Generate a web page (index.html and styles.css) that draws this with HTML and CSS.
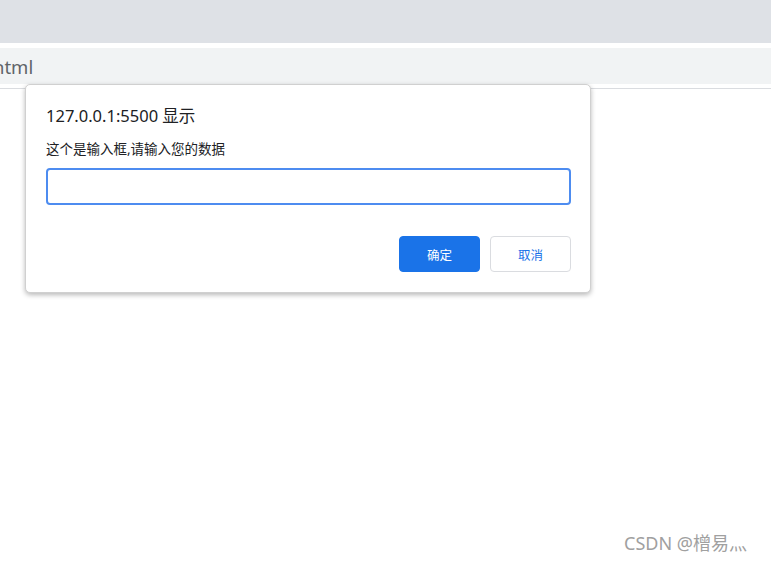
FILE: index.html
```html
<!DOCTYPE html>
<html lang="zh">
<head>
<meta charset="utf-8">
<title>prompt</title>
<link rel="stylesheet" href="styles.css">
</head>
<body>
<div class="tabstrip"></div>
<div class="gap"></div>
<div class="toolbar"><span class="url">html</span></div>
<div class="spacer"></div>
<div class="page">
  <div class="watermark">CSDN @橧易灬</div>
</div>
<div class="dialog">
  <div class="title">127.0.0.1:5500 显示</div>
  <div class="message">这个是输入框,请输入您的数据</div>
  <div class="field"></div>
  <div class="actions">
    <button class="btn primary">确定</button>
    <button class="btn secondary">取消</button>
  </div>
</div>
</body>
</html>
```

FILE: styles.css
```css
html, body {
  margin: 0;
  padding: 0;
}
body {
  width: 771px;
  height: 562px;
  overflow: hidden;
  position: relative;
  background: #ffffff;
  font-family: "Noto Sans", "Noto Sans CJK SC", sans-serif;
}
.tabstrip {
  height: 43px;
  background: #dee1e6;
}
.gap {
  height: 5px;
  background: #ffffff;
}
.toolbar {
  height: 36px;
  background: #f1f3f4;
  overflow: hidden;
  display: flex;
  align-items: center;
}
.url {
  font-size: 18.5px;
  color: #5f6368;
  margin-left: -7px;
  line-height: 22px;
  padding-top: 1px;
}
.spacer {
  height: 4px;
  border-bottom: 1px solid #dadce0;
}
.page {
  height: 473px;
  display: flex;
  justify-content: flex-end;
  align-items: flex-end;
}
.watermark {
  font-size: 18px;
  color: #a0a0a0;
  margin: 0 16px 7px 0;
  white-space: nowrap;
  width: 131px;
  overflow: hidden;
}
.dialog {
  position: absolute;
  left: 25px;
  top: 84px;
  width: 525px;
  height: 207px;
  border: 1px solid #d0d0d0;
  border-radius: 5px;
  background: #ffffff;
  box-shadow: 0 2px 5px rgba(0, 0, 0, 0.28);
  padding: 0 19px 0 20px;
  display: flex;
  flex-direction: column;
}
.title {
  font-size: 16.5px;
  color: #202124;
  line-height: 20px;
  margin-top: 21px;
}
.message {
  font-size: 13.5px;
  color: #202124;
  line-height: 18px;
  margin-top: 14px;
}
.field {
  margin-top: 10px;
  height: 33px;
  flex: none;
  border: 2px solid #4d8cf0;
  border-radius: 4px;
}
.actions {
  margin-top: 31px;
  display: flex;
  justify-content: flex-end;
  gap: 10px;
}
.btn {
  width: 81px;
  height: 36px;
  border-radius: 4px;
  font-family: "Noto Sans", "Noto Sans CJK SC", sans-serif;
  font-size: 12.5px;
  padding: 0;
  cursor: pointer;
}
.primary {
  background: #1a73e8;
  border: 1px solid #1a73e8;
  color: #ffffff;
}
.secondary {
  background: #ffffff;
  border: 1px solid #dadce0;
  color: #1a73e8;
}
```
